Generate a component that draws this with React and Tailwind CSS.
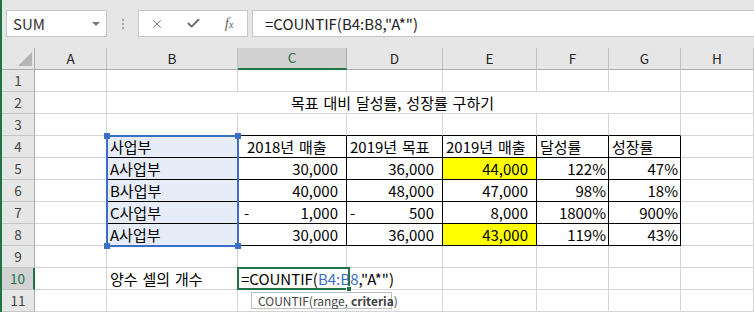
import { X, Check } from "lucide-react";

const font = { fontFamily: '"Noto Sans CJK KR", "Noto Sans", sans-serif' };

const letters = ["A", "B", "C", "D", "E", "F", "G", "H"];

// table body: rows 4..8, columns B..G
const table = {
  4: ["사업부", "2018년 매출", "2019년 목표", "2019년 매출", "달성률", "성장률"],
  5: ["A사업부", "30,000", "36,000", "44,000", "122%", "47%"],
  6: ["B사업부", "40,000", "48,000", "47,000", "98%", "18%"],
  7: ["C사업부", ["-", "1,000"], ["-", "500"], "8,000", "1800%", "900%"],
  8: ["A사업부", "30,000", "36,000", "43,000", "119%", "43%"],
};

const yellow = { "5-3": true, "8-3": true };

function RowHeader({ n }) {
  const active = n === 10;
  return (
    <div
      className={
        "flex h-[22px] items-center justify-center border-b border-b-[#c6c6c6] text-[13.5px] " +
        (active
          ? "border-r-2 border-r-[#217346] bg-[#d2d2d2] text-[#217346]"
          : "border-r border-r-[#ababab] bg-[#e6e6e6] text-[#444]")
      }
    >
      {n}
    </div>
  );
}

function TableCell({ row, col, value }) {
  const isHead = row === 4;
  const isName = col === 0;
  const right = !isHead && !isName;
  const pad =
    col === 1 && isHead
      ? "pl-[9px]"
      : right
      ? col <= 3
        ? "pr-[8px]"
        : "pr-[2px]"
      : "pl-[3px]";
  const bg = yellow[`${row}-${col}`]
    ? "bg-[#ffff00]"
    : isName
    ? "bg-[#e6edf8]"
    : "";
  if (Array.isArray(value)) {
    return (
      <div
        className={`flex h-[22px] items-center justify-between border-r border-b border-black pr-[8px] ${
          col === 1 ? "pl-[6px]" : "pl-[3px]"
        }`}
      >
        <span>{value[0]}</span>
        <span>{value[1]}</span>
      </div>
    );
  }
  return (
    <div
      className={`flex h-[22px] items-center whitespace-nowrap border-r border-b border-black ${pad} ${bg} ${
        right ? "justify-end" : "justify-start"
      }`}
    >
      {value}
    </div>
  );
}

function Blank({ black }) {
  return (
    <div
      className={
        "h-[22px] border-r border-b " +
        (black === "r"
          ? "border-r-black border-b-[#d4d4d4]"
          : black === "b"
          ? "border-r-[#d4d4d4] border-b-black"
          : "border-[#d4d4d4]")
      }
    />
  );
}

function Row({ n }) {
  const cells = [];
  if (n === 2) {
    cells.push(<Blank key="a" />);
    cells.push(
      <div
        key="t"
        className="col-span-6 flex h-[22px] items-center justify-center border-r border-b border-[#d4d4d4] pr-[2px]"
      >
        목표 대비 달성률, 성장률 구하기
      </div>
    );
    cells.push(<Blank key="h" />);
  } else if (table[n]) {
    cells.push(<Blank key="a" black="r" />);
    table[n].forEach((v, i) => cells.push(<TableCell key={i} row={n} col={i} value={v} />));
    cells.push(<Blank key="h" />);
  } else if (n === 10) {
    cells.push(<Blank key="a" />);
    cells.push(
      <div key="b" className="flex h-[22px] items-center border-r border-b border-[#d4d4d4] pl-[3px]">
        양수 셀의 개수
      </div>
    );
    cells.push(
      <div key="c" className="flex h-[22px] items-center overflow-visible whitespace-nowrap border-b border-[#d4d4d4] pl-[3px]">
        =COUNTIF(<span className="text-[#3b6fc6]">B4:B8</span>,"A*")
      </div>
    );
    cells.push(<Blank key="d" />);
    cells.push(<Blank key="e" />);
    cells.push(<Blank key="f" />);
    cells.push(<Blank key="g" />);
    cells.push(<Blank key="h" />);
  } else {
    letters.forEach((l, i) =>
      cells.push(<Blank key={l} black={n === 3 && i >= 1 && i <= 6 ? "b" : undefined} />)
    );
  }
  return (
    <>
      <RowHeader n={n} />
      {cells}
    </>
  );
}

export default function App() {
  return (
    <div
      className="relative h-[312px] w-[754px] overflow-hidden border-l-2 border-[#217346] bg-[#e6e6e6] text-[15px] leading-none text-black [word-spacing:1.5px]"
      style={font}
    >
      {/* formula bar */}
      <div className="flex h-[48px] items-start pt-[10px]">
        <div className="ml-[4px] flex h-[27px] w-[101px] items-center justify-between border border-[#c6c6c6] bg-white pl-[6px] pr-[6px] text-[#333]">
          <span>SUM</span>
          <span className="h-0 w-0 border-x-[4px] border-t-[4px] border-x-transparent border-t-[#777]" />
        </div>
        <div className="flex h-[27px] w-[31px] flex-col items-center justify-center gap-[2px]">
          <span className="h-[2px] w-[2px] bg-[#a8a8a8]" />
          <span className="h-[2px] w-[2px] bg-[#a8a8a8]" />
          <span className="h-[2px] w-[2px] bg-[#a8a8a8]" />
        </div>
        <div className="flex h-[27px] w-[110px] items-center border border-[#c6c6c6] bg-white text-[#6a6a6a]">
          <span className="flex w-[37px] justify-center">
            <X size={14} strokeWidth={1.6} />
          </span>
          <span className="flex w-[36px] justify-center">
            <Check size={15} strokeWidth={3} />
          </span>
          <span
            className="flex w-[36px] items-baseline justify-center italic text-[#666]"
            style={{ fontFamily: '"Liberation Serif", serif' }}
          >
            <span className="text-[15px]">f</span>
            <span className="text-[11px]">x</span>
          </span>
        </div>
        <div className="ml-[4px] flex h-[27px] flex-1 items-center border-y border-l border-[#c6c6c6] bg-white pl-[12px] text-[#222]">
          =COUNTIF(B4:B8,"A*")
        </div>
      </div>

      {/* sheet */}
      <div className="grid grid-cols-[33px_72px_131px_109px_96px_94px_72px_72px_73px] bg-white">
        <div className="relative h-[22px] border-r border-b border-[#ababab] bg-[#e6e6e6]">
          <span className="absolute bottom-[3px] right-[2px] h-0 w-0 border-b-[14px] border-l-[14px] border-b-[#b4b4b4] border-l-transparent" />
        </div>
        {letters.map((l) => (
          <div
            key={l}
            className={
              "flex h-[22px] items-center justify-center text-[13.5px] " +
              (l === "C"
                ? "border-r border-r-[#ababab] border-b-2 border-b-[#217346] bg-[#d2d2d2] text-[#217346]"
                : "border-r border-b border-r-[#c0c0c0] border-b-[#ababab] bg-[#e6e6e6] text-[#222]")
            }
          >
            {l}
          </div>
        ))}
        {[1, 2, 3, 4, 5, 6, 7, 8, 9, 10, 11].map((n) => (
          <Row key={n} n={n} />
        ))}
      </div>

      {/* range reference highlight B4:B8 */}
      <div className="pointer-events-none absolute left-[104px] top-[135px] h-[112px] w-[133px] border-2 border-[#3b6fc6]">
        <span className="absolute -left-[4px] -top-[4px] h-[6px] w-[6px] bg-[#3b6fc6]" />
        <span className="absolute -right-[4px] -top-[4px] h-[6px] w-[6px] bg-[#3b6fc6]" />
        <span className="absolute -bottom-[4px] -left-[4px] h-[6px] w-[6px] bg-[#3b6fc6]" />
        <span className="absolute -bottom-[4px] -right-[4px] h-[6px] w-[6px] bg-[#3b6fc6]" />
      </div>

      {/* active cell C10 */}
      <div className="pointer-events-none absolute left-[235px] top-[267px] h-[23px] w-[113px] border-2 border-[#217346]">
        <span className="absolute -bottom-[4px] -right-[4px] h-[6px] w-[6px] border border-white bg-[#217346]" />
      </div>

      {/* function tooltip */}
      <div className="absolute left-[249px] top-[292px] flex h-[17px] w-[141px] items-center border border-[#bdbdbd] bg-white pl-[6px] text-[12px] text-[#444] [word-spacing:0px]">
        COUNTIF(range, <b className="ml-[3px] font-bold">criteria</b>)
      </div>
    </div>
  );
}
